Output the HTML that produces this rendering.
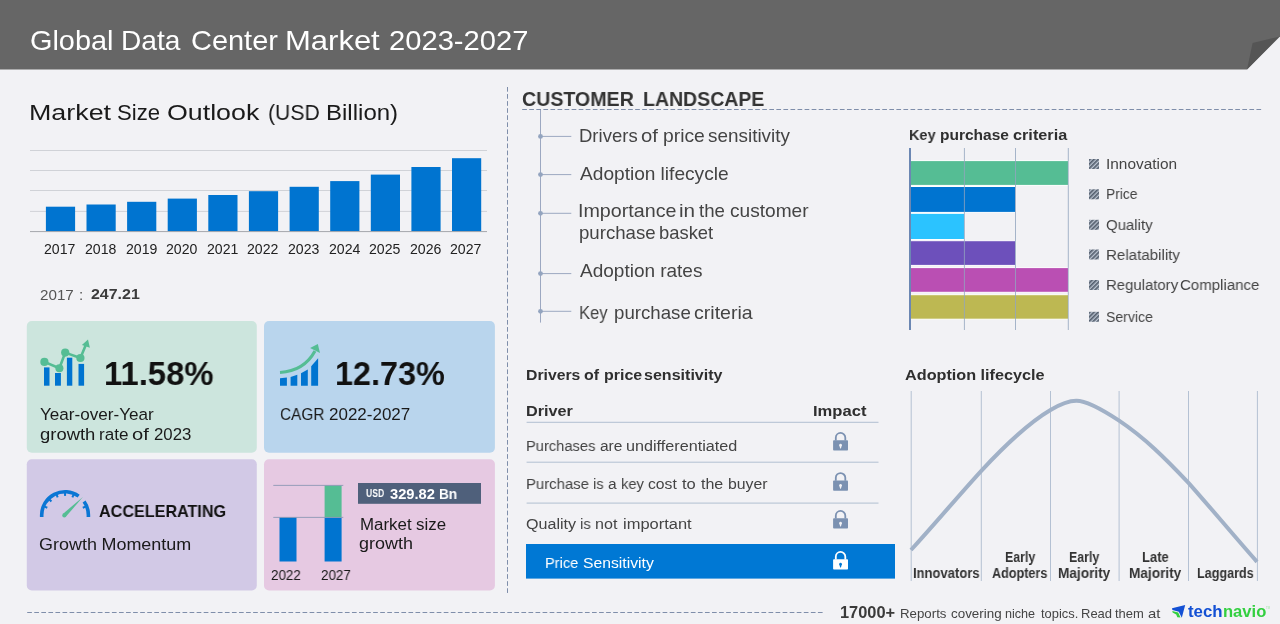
<!DOCTYPE html>
<html><head><meta charset="utf-8"><title>Global Data Center Market 2023-2027</title>
<style>
html,body{margin:0;padding:0;}
body{width:1280px;height:624px;position:relative;overflow:hidden;background:#f2f2f5;font-family:"Liberation Sans",sans-serif;}
.t{position:absolute;will-change:transform;transform-origin:0 0;white-space:pre;line-height:1;font-family:"Liberation Sans",sans-serif;}
.abs{position:absolute;}
.card{position:absolute;border-radius:5px;}
svg{position:absolute;left:0;top:0;}

</style></head>
<body>
<svg width="1280" height="624" viewBox="0 0 1280 624">
  <!-- cards -->
  <rect x="26.8" y="321" width="230" height="131.7" rx="5" fill="#cce5dd"/>
  <rect x="264" y="321" width="230.9" height="131.7" rx="5" fill="#b9d5ed"/>
  <rect x="26.8" y="459.2" width="230" height="131.3" rx="5" fill="#d2c9e6"/>
  <rect x="264" y="459.2" width="230.9" height="131.3" rx="5" fill="#e6c9e2"/>
  <!-- header -->
  <polygon points="0,0 1280,0 1280,36.5 1247,69.5 0,69.5" fill="#666666"/>
  <polygon points="1247,69.5 1252.6,43 1279,36.7" fill="#555555"/>
  <!-- dashed separators -->
  <line x1="507.5" y1="87" x2="507.5" y2="593" stroke="#7f8eaa" stroke-width="1" stroke-dasharray="4.7 2.36"/>
  <line x1="522.2" y1="109.5" x2="1262" y2="109.5" stroke="#7f8eaa" stroke-width="1" stroke-dasharray="4.7 2.36"/>
  <line x1="27.2" y1="612.5" x2="823" y2="612.5" stroke="#7f8eaa" stroke-width="1" stroke-dasharray="4.7 2.36"/>

  <!-- market size chart -->
  <g stroke="#d0d2d7" stroke-width="1">
    <line x1="30" y1="150.5" x2="487" y2="150.5"/>
    <line x1="30" y1="170.5" x2="487" y2="170.5"/>
    <line x1="30" y1="190.5" x2="487" y2="190.5"/>
    <line x1="30" y1="211.4" x2="487" y2="211.4"/>
  </g>
  <g fill="#0074d0">
    <rect x="45.9" y="206.7" width="29.2" height="24.8"/>
    <rect x="86.5" y="204.5" width="29.2" height="27"/>
    <rect x="127.1" y="201.8" width="29.2" height="29.7"/>
    <rect x="167.7" y="198.6" width="29.2" height="32.9"/>
    <rect x="208.3" y="195" width="29.2" height="36.5"/>
    <rect x="248.9" y="191.2" width="29.2" height="40.3"/>
    <rect x="289.6" y="186.8" width="29.2" height="44.7"/>
    <rect x="330.2" y="181.1" width="29.2" height="50.4"/>
    <rect x="370.8" y="174.6" width="29.2" height="56.9"/>
    <rect x="411.4" y="167" width="29.2" height="64.5"/>
    <rect x="452" y="158.2" width="29.2" height="73.3"/>
  </g>
  <line x1="30" y1="231.6" x2="487" y2="231.6" stroke="#a4a6ac" stroke-width="1"/>

  <!-- icon 1: bars + line -->
  <g fill="#0074d0">
    <rect x="44" y="367.4" width="5.5" height="18.3"/>
    <rect x="55" y="373" width="5.9" height="12.7"/>
    <rect x="66.9" y="357.7" width="5.4" height="28"/>
    <rect x="78.5" y="363.9" width="5.6" height="21.8"/>
  </g>
  <g stroke="#55bd94" stroke-width="2.6" fill="none" stroke-linejoin="round">
    <polyline points="44.4,361.9 59.4,368.2 65.2,352.6 80.4,358 86.1,344.2"/>
  </g>
  <g fill="#55bd94">
    <circle cx="44.4" cy="361.9" r="4.1"/><circle cx="59.4" cy="368.2" r="4"/><circle cx="65.2" cy="352.6" r="4.1"/><circle cx="80.4" cy="358" r="4.1"/>
    <polygon points="88,339.6 89.9,347.7 81.9,344.9"/>
  </g>

  <!-- icon 2: growing bars + arrow -->
  <g fill="#0074d0">
    <polygon points="280,385.7 280,378.2 286.9,377.6 286.9,385.7"/>
    <polygon points="290.6,385.7 290.6,376.9 297.3,374.8 297.3,385.7"/>
    <polygon points="301,385.7 301,373.3 307.8,369.6 307.8,385.7"/>
    <polygon points="311.2,385.7 311.2,366.2 318.1,358.3 318.1,385.7"/>
  </g>
  <path d="M280,372.5 Q304,371 315,351" stroke="#55bd94" stroke-width="3.1" fill="none"/>
  <polygon points="317.8,344 320,352.9 310.1,348" fill="#55bd94"/>

  <!-- icon 3: gauge -->
  <g stroke="#0b76d4" fill="none">
    <path d="M41.7,516.9 V515.1 A23.35,23.35 0 0 1 78.64,496.11" stroke-width="3.6"/>
    <path d="M84.08,501.57 A23.35,23.35 0 0 1 88.4,515.1 V516.9" stroke-width="3.6"/>
    <g stroke-width="2">
      <line x1="44.59" y1="506.62" x2="47.3" y2="507.74"/>
      <line x1="49.39" y1="499.44" x2="51.4" y2="501.45"/>
      <line x1="56.57" y1="494.64" x2="57.7" y2="497.35"/>
      <line x1="65.05" y1="492.95" x2="65.05" y2="495.9"/>
      <line x1="73.53" y1="494.64" x2="72.4" y2="497.35"/>
      <line x1="85.51" y1="506.62" x2="82.8" y2="507.74"/>
    </g>
  </g>
  <polygon points="65.8,516.8 62.8,513.9 82.9,497.1" fill="#55bd94"/>
  <circle cx="64.3" cy="515.4" r="2.05" fill="#55bd94"/>

  <!-- mini chart in pink card -->
  <rect x="279.5" y="517.4" width="17" height="44.1" fill="#0074d0"/>
  <rect x="324.6" y="517.4" width="17" height="44.1" fill="#0074d0"/>
  <rect x="324.6" y="485.4" width="17" height="32" fill="#55bd94"/>
  <line x1="273.3" y1="485.4" x2="343.3" y2="485.4" stroke="#8d98b5" stroke-width="0.9"/>
  <line x1="273.3" y1="517.4" x2="343.3" y2="517.4" stroke="#8d98b5" stroke-width="0.9"/>
  <rect x="358" y="483" width="123" height="20.8" fill="#4f607b"/>

  <!-- tree -->
  <g stroke="#9ca8c1" stroke-width="1" fill="none">
    <line x1="540.5" y1="110" x2="540.5" y2="322.6"/>
    <line x1="540.5" y1="136.4" x2="571.3" y2="136.4"/>
    <line x1="540.5" y1="174.6" x2="571.3" y2="174.6"/>
    <line x1="540.5" y1="213.3" x2="571.3" y2="213.3"/>
    <line x1="540.5" y1="273.6" x2="571.3" y2="273.6"/>
    <line x1="540.5" y1="311.3" x2="571.3" y2="311.3"/>
  </g>
  <g fill="#93a4bf">
    <circle cx="540.5" cy="136.4" r="2.4"/><circle cx="540.5" cy="174.6" r="2.4"/><circle cx="540.5" cy="213.3" r="2.4"/><circle cx="540.5" cy="273.6" r="2.4"/><circle cx="540.5" cy="311.3" r="2.4"/>
  </g>

  <!-- key purchase criteria bars -->
  <g stroke="#ffffff" stroke-width="1">
    <rect x="910.5" y="160.6" width="158" height="24.8" fill="#55bd94"/>
    <rect x="910.5" y="186.5" width="105.2" height="25.9" fill="#0074d0"/>
    <rect x="910.5" y="213.3" width="54.2" height="26.2" fill="#2bc3ff"/>
    <rect x="910.5" y="240.7" width="105.2" height="24.7" fill="#6d50bb"/>
    <rect x="910.5" y="267.6" width="158" height="24.7" fill="#ba4fb3"/>
    <rect x="910.5" y="294.7" width="158" height="24.5" fill="#bdb852"/>
  </g>
  <g stroke="#93a5bf" stroke-width="1" opacity="0.8">
    <line x1="964.4" y1="148" x2="964.4" y2="330"/>
    <line x1="1015.5" y1="148" x2="1015.5" y2="330"/>
    <line x1="1068.3" y1="148" x2="1068.3" y2="330"/>
  </g>
  <line x1="910" y1="148" x2="910" y2="330" stroke="#6c87b3" stroke-width="2"/>
  <defs>
    <pattern id="hatch" width="3" height="3" patternUnits="userSpaceOnUse" patternTransform="rotate(-45 1089 159)">
      <rect width="3" height="3" fill="#bcc5d2"/>
      <rect width="3" height="1.7" fill="#55606f"/>
    </pattern>
  </defs>
  <g fill="url(#hatch)">
    <rect x="1089" y="159" width="10" height="10"/>
    <rect x="1089" y="189.3" width="10" height="10"/>
    <rect x="1089" y="219.8" width="10" height="10"/>
    <rect x="1089" y="249.5" width="10" height="10"/>
    <rect x="1089" y="280" width="10" height="10"/>
    <rect x="1089" y="311.8" width="10" height="10"/>
  </g>

  <!-- drivers table -->
  <g stroke="#b1bfd1" stroke-width="1">
    <line x1="526.6" y1="422.3" x2="878.5" y2="422.3"/>
    <line x1="526.6" y1="462.2" x2="878.5" y2="462.2"/>
    <line x1="526.6" y1="503.1" x2="878.5" y2="503.1"/>
  </g>
  <rect x="526" y="544" width="369" height="34.6" fill="#0078d4"/>
  <defs>
    <g id="lock">
      <path d="M2.7,8.6 V5.65 A4.75,4.75 0 0 1 12.2,5.65 V8.6" fill="none" stroke-width="1.8" stroke="currentColor"/>
      <rect x="0" y="8.3" width="14.9" height="10.3" rx="0.8" fill="currentColor"/>
    </g>
    <path id="keyh" d="M0,-1.5 A1.5,1.5 0 0 1 1.05,1.05 L0.35,3.2 H-0.35 L-1.05,1.05 A1.5,1.5 0 0 1 0,-1.5 Z"/>
  </defs>
  <g color="#7b91b1"><use href="#lock" x="833.1" y="432"/><use href="#keyh" x="840.55" y="445.3" fill="#f2f2f5"/></g>
  <g color="#7b91b1"><use href="#lock" x="833.1" y="472.2"/><use href="#keyh" x="840.55" y="485.5" fill="#f2f2f5"/></g>
  <g color="#7b91b1"><use href="#lock" x="833.1" y="510"/><use href="#keyh" x="840.55" y="523.3" fill="#f2f2f5"/></g>
  <g color="#ffffff"><use href="#lock" x="833.1" y="551"/><use href="#keyh" x="840.55" y="564.3" fill="#0078d4"/></g>

  <!-- adoption lifecycle -->
  <g stroke="#b4c1d3" stroke-width="1">
    <line x1="911.2" y1="391" x2="911.2" y2="581"/>
    <line x1="981.3" y1="391" x2="981.3" y2="581"/>
    <line x1="1050.5" y1="391" x2="1050.5" y2="581"/>
    <line x1="1119.1" y1="391" x2="1119.1" y2="581"/>
    <line x1="1188.5" y1="391" x2="1188.5" y2="581"/>
    <line x1="1257.4" y1="391" x2="1257.4" y2="581"/>
  </g>
  <path d="M911,550 C940,518 960,494 981.3,470.8 C1010,440 1030,422 1050.5,410 C1062,403 1070,400.7 1076.4,400.7 C1085,400.7 1100,408 1119.1,420.6 C1145,438 1165,458 1188.5,482.8 C1210,507 1235,537 1257,561.8" stroke="#a1b1c7" stroke-width="4" fill="none" stroke-linecap="butt"/>

  <!-- technavio logo icon -->
  <polygon points="1172,608.2 1185.2,604.9 1181.8,617.8 1178.8,611.7 1172.4,610" fill="#1350d4"/>
  <polygon points="1172.3,610.9 1178.2,612.6 1180.5,617.4 1177.3,617.3 1176.2,614.5 1172.6,612.4" fill="#33cf40"/>
</svg>

<div class="t" style="left:29.97px;top:27px;font-size:28px;color:#ffffff;transform:scaleX(1.0308);">Global</div>
<div class="t" style="left:121.29px;top:27px;font-size:28px;color:#ffffff;transform:scaleX(1.0035);">Data</div>
<div class="t" style="left:190.67px;top:27px;font-size:28px;color:#ffffff;transform:scaleX(1.0337);">Center</div>
<div class="t" style="left:284.89px;top:27px;font-size:28px;color:#ffffff;transform:scaleX(1.1071);">Market</div>
<div class="t" style="left:388.56px;top:27px;font-size:28px;color:#ffffff;transform:scaleX(1.0409);">2023-2027</div>
<div class="t" style="left:28.81px;top:102px;font-size:22px;color:#1a1a1a;transform:scaleX(1.2208);">Market</div>
<div class="t" style="left:117.39px;top:102px;font-size:22px;color:#1a1a1a;transform:scaleX(1.0073);">Size</div>
<div class="t" style="left:166.58px;top:102px;font-size:22px;color:#1a1a1a;transform:scaleX(1.2173);">Outlook</div>
<div class="t" style="left:268.14px;top:102px;font-size:22px;color:#1a1a1a;transform:scaleX(0.9615);">(USD</div>
<div class="t" style="left:326.22px;top:102px;font-size:22px;color:#1a1a1a;transform:scaleX(1.0921);">Billion)</div>
<div class="t" style="left:44.39px;top:242px;font-size:14px;color:#222;transform:scaleX(1.0067);">2017</div>
<div class="t" style="left:85.00px;top:242px;font-size:14px;color:#222;transform:scaleX(1.0067);">2018</div>
<div class="t" style="left:125.61px;top:242px;font-size:14px;color:#222;transform:scaleX(1.0067);">2019</div>
<div class="t" style="left:166.22px;top:242px;font-size:14px;color:#222;transform:scaleX(1.0067);">2020</div>
<div class="t" style="left:206.83px;top:242px;font-size:14px;color:#222;transform:scaleX(1.0067);">2021</div>
<div class="t" style="left:247.44px;top:242px;font-size:14px;color:#222;transform:scaleX(1.0067);">2022</div>
<div class="t" style="left:288.05px;top:242px;font-size:14px;color:#222;transform:scaleX(1.0067);">2023</div>
<div class="t" style="left:328.66px;top:242px;font-size:14px;color:#222;transform:scaleX(1.0067);">2024</div>
<div class="t" style="left:369.27px;top:242px;font-size:14px;color:#222;transform:scaleX(1.0067);">2025</div>
<div class="t" style="left:409.88px;top:242px;font-size:14px;color:#222;transform:scaleX(1.0067);">2026</div>
<div class="t" style="left:450.49px;top:242px;font-size:14px;color:#222;transform:scaleX(1.0067);">2027</div>
<div class="t" style="left:39.60px;top:287px;font-size:15.2px;color:#555;transform:scaleX(0.9969);">2017</div>
<div class="t" style="left:78.60px;top:287px;font-size:15.2px;color:#555;transform:scaleX(1.0000);">:</div>
<div class="t" style="left:90.90px;top:287px;font-size:14.8px;color:#3c3c3c;transform:scaleX(1.0778);font-weight:700;">247.21</div>
<div class="t" style="left:103.81px;top:357px;font-size:33px;color:#111;transform:scaleX(0.9944);font-weight:700;">11.58%</div>
<div class="t" style="left:39.73px;top:407px;font-size:16.8px;color:#1a1a1a;transform:scaleX(1.0191);">Year-over-Year</div>
<div class="t" style="left:39.65px;top:427px;font-size:16.8px;color:#1a1a1a;transform:scaleX(1.0990);">growth</div>
<div class="t" style="left:98.73px;top:427px;font-size:16.8px;color:#1a1a1a;transform:scaleX(1.0185);">rate</div>
<div class="t" style="left:132.30px;top:427px;font-size:16.8px;color:#1a1a1a;transform:scaleX(1.2000);">of</div>
<div class="t" style="left:153.76px;top:427px;font-size:16.8px;color:#1a1a1a;transform:scaleX(0.9903);">2023</div>
<div class="t" style="left:334.64px;top:357px;font-size:33px;color:#111;transform:scaleX(0.9817);font-weight:700;">12.73%</div>
<div class="t" style="left:279.58px;top:407px;font-size:16.8px;color:#1a1a1a;transform:scaleX(0.9196);">CAGR</div>
<div class="t" style="left:329.49px;top:407px;font-size:16.8px;color:#1a1a1a;transform:scaleX(1.0127);">2022-2027</div>
<div class="t" style="left:99.41px;top:503px;font-size:16.4px;color:#111;transform:scaleX(0.9850);font-weight:700;">ACCELERATING</div>
<div class="t" style="left:39.32px;top:537px;font-size:16.6px;color:#1a1a1a;transform:scaleX(1.0819);word-spacing:-0.349px;">Growth Momentum</div>
<div class="t" style="left:271.33px;top:569px;font-size:13.8px;color:#1a1a1a;transform:scaleX(0.9724);">2022</div>
<div class="t" style="left:321.33px;top:569px;font-size:13.8px;color:#1a1a1a;transform:scaleX(0.9724);">2027</div>
<div class="t" style="left:366.44px;top:489px;font-size:10px;color:#ffffff;transform:scaleX(0.8600);font-weight:700;">USD</div>
<div class="t" style="left:389.80px;top:487px;font-size:14.7px;color:#ffffff;transform:scaleX(0.9955);font-weight:700;">329.82</div>
<div class="t" style="left:438.77px;top:487px;font-size:14.7px;color:#ffffff;transform:scaleX(0.9278);font-weight:700;">Bn</div>
<div class="t" style="left:359.83px;top:517px;font-size:15.8px;color:#1a1a1a;transform:scaleX(1.0697);word-spacing:-0.286px;">Market size</div>
<div class="t" style="left:359.36px;top:536px;font-size:15.8px;color:#1a1a1a;transform:scaleX(1.1370);">growth</div>
<div class="t" style="left:521.62px;top:89px;font-size:20px;color:#333;transform:scaleX(0.9796);font-weight:700;">CUSTOMER</div>
<div class="t" style="left:642.62px;top:89px;font-size:20px;color:#333;transform:scaleX(0.9756);font-weight:700;">LANDSCAPE</div>
<div class="t" style="left:578.99px;top:127px;font-size:18.4px;color:#444;transform:scaleX(1.0070);">Drivers</div>
<div class="t" style="left:641.30px;top:127px;font-size:18.4px;color:#444;transform:scaleX(1.1000);">of</div>
<div class="t" style="left:662.95px;top:127px;font-size:18.4px;color:#444;transform:scaleX(1.0500);">price</div>
<div class="t" style="left:708.37px;top:127px;font-size:18.4px;color:#444;transform:scaleX(1.0278);">sensitivity</div>
<div class="t" style="left:579.60px;top:165px;font-size:18.4px;color:#444;transform:scaleX(1.0399);word-spacing:-0.196px;">Adoption lifecycle</div>
<div class="t" style="left:577.86px;top:202px;font-size:18.4px;color:#444;transform:scaleX(1.0702);">Importance</div>
<div class="t" style="left:679.38px;top:202px;font-size:18.4px;color:#444;transform:scaleX(1.1250);">in</div>
<div class="t" style="left:699.25px;top:202px;font-size:18.4px;color:#444;transform:scaleX(1.0140);">the</div>
<div class="t" style="left:730.46px;top:202px;font-size:18.4px;color:#444;transform:scaleX(1.0392);">customer</div>
<div class="t" style="left:578.99px;top:224px;font-size:18.4px;color:#444;transform:scaleX(1.0135);">purchase</div>
<div class="t" style="left:658.90px;top:224px;font-size:18.4px;color:#444;transform:scaleX(0.9972);">basket</div>
<div class="t" style="left:579.60px;top:262px;font-size:18.4px;color:#444;transform:scaleX(1.0337);word-spacing:-0.166px;">Adoption rates</div>
<div class="t" style="left:578.90px;top:304px;font-size:18.4px;color:#444;transform:scaleX(0.9000);">Key</div>
<div class="t" style="left:613.59px;top:304px;font-size:18.4px;color:#444;transform:scaleX(1.0149);">purchase</div>
<div class="t" style="left:693.84px;top:304px;font-size:18.4px;color:#444;transform:scaleX(1.0630);">criteria</div>
<div class="t" style="left:908.86px;top:127px;font-size:15.4px;color:#2f2f2f;transform:scaleX(0.9407);font-weight:700;">Key</div>
<div class="t" style="left:940.49px;top:127px;font-size:15.4px;color:#2f2f2f;transform:scaleX(1.0075);font-weight:700;">purchase</div>
<div class="t" style="left:1012.54px;top:127px;font-size:15.4px;color:#2f2f2f;transform:scaleX(1.0560);font-weight:700;">criteria</div>
<div class="t" style="left:1105.90px;top:156px;font-size:15.4px;color:#444;transform:scaleX(0.9971);">Innovation</div>
<div class="t" style="left:1106.00px;top:186px;font-size:15.4px;color:#444;transform:scaleX(0.8971);">Price</div>
<div class="t" style="left:1105.93px;top:217px;font-size:15.4px;color:#444;transform:scaleX(0.9723);">Quality</div>
<div class="t" style="left:1105.92px;top:247px;font-size:15.4px;color:#444;transform:scaleX(0.9824);">Relatability</div>
<div class="t" style="left:1105.99px;top:309px;font-size:15.4px;color:#444;transform:scaleX(0.9140);">Service</div>
<div class="t" style="left:1105.93px;top:277px;font-size:15.4px;color:#444;transform:scaleX(0.9699);">Regulatory</div>
<div class="t" style="left:1180.32px;top:277px;font-size:15.4px;color:#444;transform:scaleX(0.9763);">Compliance</div>
<div class="t" style="left:525.88px;top:367px;font-size:15.5px;color:#2f2f2f;transform:scaleX(1.0173);font-weight:700;">Drivers</div>
<div class="t" style="left:583.97px;top:367px;font-size:15.5px;color:#2f2f2f;transform:scaleX(1.0286);font-weight:700;">of</div>
<div class="t" style="left:603.57px;top:367px;font-size:15.5px;color:#2f2f2f;transform:scaleX(1.0306);font-weight:700;">price</div>
<div class="t" style="left:644.06px;top:367px;font-size:15.5px;color:#2f2f2f;transform:scaleX(1.0360);font-weight:700;">sensitivity</div>
<div class="t" style="left:525.55px;top:403px;font-size:15.5px;color:#2f2f2f;transform:scaleX(1.0455);font-weight:700;">Driver</div>
<div class="t" style="left:812.53px;top:403px;font-size:15.5px;color:#2f2f2f;transform:scaleX(1.0694);font-weight:700;">Impact</div>
<div class="t" style="left:525.85px;top:438px;font-size:15.5px;color:#444;transform:scaleX(0.9486);">Purchases</div>
<div class="t" style="left:599.51px;top:438px;font-size:15.5px;color:#444;transform:scaleX(0.9857);">are</div>
<div class="t" style="left:625.86px;top:438px;font-size:15.5px;color:#444;transform:scaleX(1.0438);">undifferentiated</div>
<div class="t" style="left:525.94px;top:476px;font-size:15.5px;color:#444;transform:scaleX(0.9625);">Purchase</div>
<div class="t" style="left:592.56px;top:476px;font-size:15.5px;color:#444;transform:scaleX(0.9400);">is</div>
<div class="t" style="left:608.00px;top:476px;font-size:15.5px;color:#444;transform:scaleX(1.0000);">a</div>
<div class="t" style="left:620.65px;top:476px;font-size:15.5px;color:#444;transform:scaleX(0.9522);">key</div>
<div class="t" style="left:648.39px;top:476px;font-size:15.5px;color:#444;transform:scaleX(1.0148);">cost</div>
<div class="t" style="left:681.90px;top:476px;font-size:15.5px;color:#444;transform:scaleX(1.0667);">to</div>
<div class="t" style="left:700.80px;top:476px;font-size:15.5px;color:#444;transform:scaleX(1.0333);">the</div>
<div class="t" style="left:727.58px;top:476px;font-size:15.5px;color:#444;transform:scaleX(1.0211);">buyer</div>
<div class="t" style="left:525.71px;top:516px;font-size:15.5px;color:#444;transform:scaleX(1.0372);">Quality</div>
<div class="t" style="left:579.79px;top:516px;font-size:15.5px;color:#444;transform:scaleX(0.9550);">is</div>
<div class="t" style="left:594.86px;top:516px;font-size:15.5px;color:#444;transform:scaleX(1.0381);">not</div>
<div class="t" style="left:622.74px;top:516px;font-size:15.5px;color:#444;transform:scaleX(1.0625);">important</div>
<div class="t" style="left:544.56px;top:555px;font-size:15.5px;color:#ffffff;transform:scaleX(0.9412);">Price</div>
<div class="t" style="left:582.59px;top:555px;font-size:15.5px;color:#ffffff;transform:scaleX(1.0145);">Sensitivity</div>
<div class="t" style="left:905.35px;top:367px;font-size:15.5px;color:#2f2f2f;transform:scaleX(1.0470);word-spacing:-0.194px;font-weight:700;">Adoption lifecycle</div>
<div class="t" style="left:913.26px;top:567px;font-size:13.9px;color:#333;transform:scaleX(0.9371);font-weight:700;">Innovators</div>
<div class="t" style="left:1004.51px;top:551px;font-size:13.9px;color:#333;transform:scaleX(0.8909);font-weight:700;">Early</div>
<div class="t" style="left:992.40px;top:567px;font-size:13.9px;color:#333;transform:scaleX(0.9082);font-weight:700;">Adopters</div>
<div class="t" style="left:1068.61px;top:551px;font-size:13.9px;color:#333;transform:scaleX(0.8909);font-weight:700;">Early</div>
<div class="t" style="left:1057.72px;top:567px;font-size:13.9px;color:#333;transform:scaleX(0.9808);font-weight:700;">Majority</div>
<div class="t" style="left:1141.51px;top:551px;font-size:13.9px;color:#333;transform:scaleX(0.9370);font-weight:700;">Late</div>
<div class="t" style="left:1128.62px;top:567px;font-size:13.9px;color:#333;transform:scaleX(0.9808);font-weight:700;">Majority</div>
<div class="t" style="left:1196.64px;top:567px;font-size:13.9px;color:#333;transform:scaleX(0.9066);font-weight:700;">Laggards</div>
<div class="t" style="left:839.98px;top:605px;font-size:16px;color:#3a3a3a;transform:scaleX(1.0231);font-weight:700;">17000+</div>
<div class="t" style="left:900.25px;top:608px;font-size:12.6px;color:#444;transform:scaleX(1.0535);">Reports</div>
<div class="t" style="left:950.84px;top:608px;font-size:12.6px;color:#444;transform:scaleX(1.0630);">covering</div>
<div class="t" style="left:1004.70px;top:608px;font-size:12.6px;color:#444;transform:scaleX(0.9966);">niche</div>
<div class="t" style="left:1040.50px;top:608px;font-size:12.6px;color:#444;transform:scaleX(1.0250);">topics.</div>
<div class="t" style="left:1080.57px;top:608px;font-size:12.6px;color:#444;transform:scaleX(1.0321);">Read</div>
<div class="t" style="left:1115.40px;top:608px;font-size:12.6px;color:#444;transform:scaleX(1.0296);">them</div>
<div class="t" style="left:1147.92px;top:608px;font-size:12.6px;color:#444;transform:scaleX(1.1778);">at</div>
<div class="t" style="left:1187.80px;top:603px;font-size:16.3px;color:#1350d4;transform:scaleX(1.0333);font-weight:700;">tech</div>
<div class="t" style="left:1222.78px;top:603px;font-size:16.3px;color:#33cf40;transform:scaleX(1.0171);font-weight:700;">navio</div>
<div class="t" style="left:1266.00px;top:607px;font-size:2.8px;color:#b9eabf;transform:scaleX(1.0000);font-weight:700;">TM</div>
</body></html>
